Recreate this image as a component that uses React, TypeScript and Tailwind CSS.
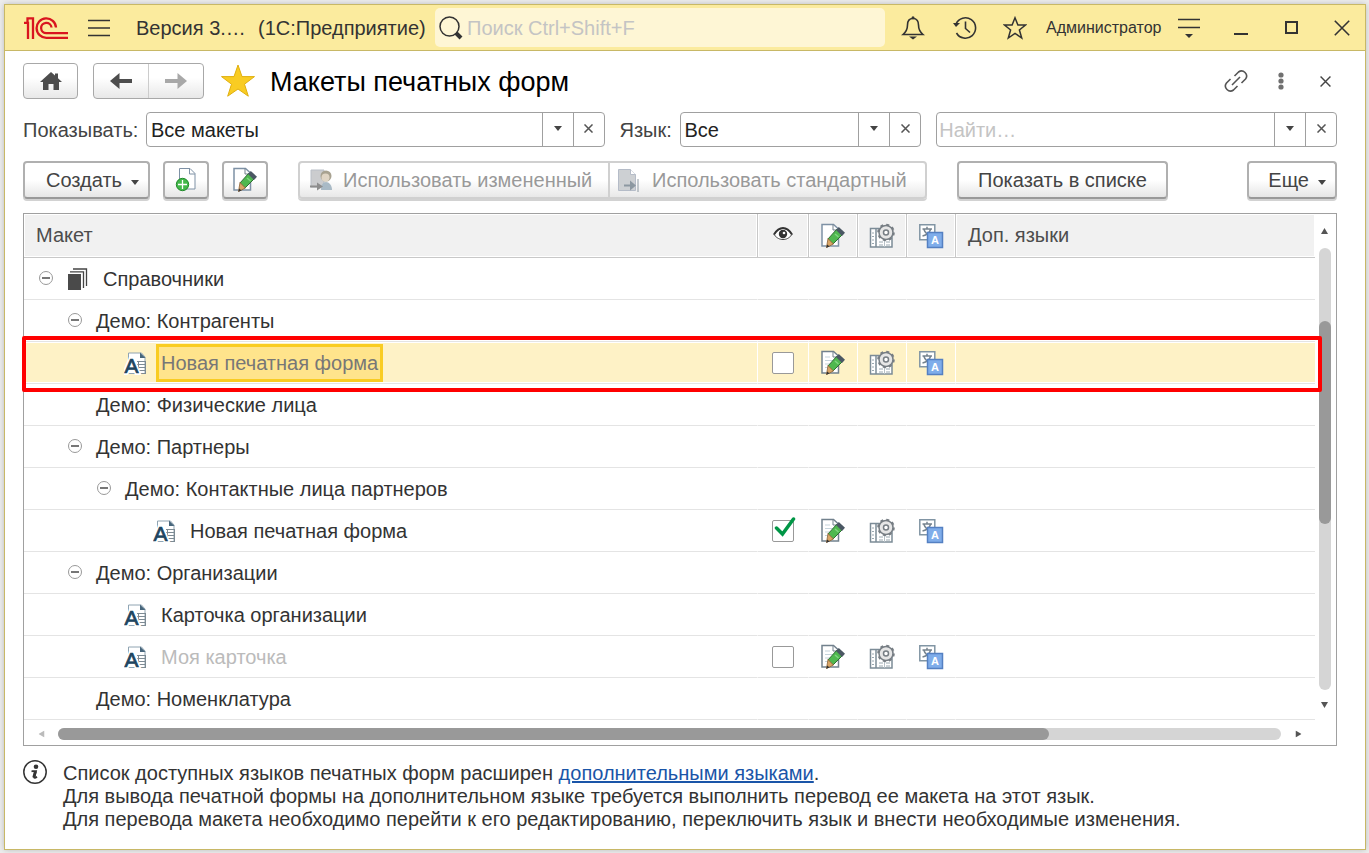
import React, { useState } from 'react';
import clsx from 'clsx';

type RowKind = 'root' | 'group' | 'layout';

interface LayoutRow {
  id: string;
  title: string;
  kind: RowKind;
  level: number;
  expanded?: boolean;
  used?: boolean;
  selected?: boolean;
  muted?: boolean;
}

const ROWS: LayoutRow[] = [
  { id: 'catalogs', title: 'Справочники', kind: 'root', level: 0, expanded: true },
  { id: 'contractors', title: 'Демо: Контрагенты', kind: 'group', level: 1, expanded: true },
  { id: 'contractors-new', title: 'Новая печатная форма', kind: 'layout', level: 2, used: false, selected: true },
  { id: 'persons', title: 'Демо: Физические лица', kind: 'group', level: 1 },
  { id: 'partners', title: 'Демо: Партнеры', kind: 'group', level: 1, expanded: true },
  { id: 'contacts', title: 'Демо: Контактные лица партнеров', kind: 'group', level: 2, expanded: true },
  { id: 'contacts-new', title: 'Новая печатная форма', kind: 'layout', level: 3, used: true },
  { id: 'companies', title: 'Демо: Организации', kind: 'group', level: 1, expanded: true },
  { id: 'company-card', title: 'Карточка организации', kind: 'layout', level: 2 },
  { id: 'my-card', title: 'Моя карточка', kind: 'layout', level: 2, used: false, muted: true },
  { id: 'items', title: 'Демо: Номенклатура', kind: 'group', level: 1 },
];

const INDENT = ['pl-[15px]', 'pl-[44px]', 'pl-[73px]', 'pl-[102px]'];

/* ---------- icons ---------- */

const Logo = () => (
  <svg width="44" height="22" viewBox="0 0 44 22" fill="none" stroke="#d9151f" strokeWidth="2.300">
    <path d="M0 5.800h4V22M3.500 5.800V1.300H9V22" />
    <path d="M32 10.500A9.700 9.700 0 1 0 22.500 20.800H44" />
    <path d="M27.500 10.500A5.200 5.200 0 1 0 22.500 16.200H44" />
  </svg>
);

const MenuIcon = () => (
  <svg width="22" height="18" viewBox="0 0 22 18" stroke="#333" strokeWidth="1.500">
    <path d="M0 1.500h22M0 9h22M0 16.500h22" />
  </svg>
);

const SearchIcon = () => (
  <svg width="24" height="24" viewBox="0 0 24 24" fill="none" stroke="#333">
    <circle cx="10.500" cy="10.500" r="9.500" strokeWidth="1.500" />
    <path d="M17 17l5 5" strokeWidth="4" />
  </svg>
);

const BellIcon = () => (
  <svg width="24" height="24" viewBox="0 0 24 24" fill="none" stroke="#333" strokeWidth="1.600">
    <path d="M12 2.500c-4 0-5.500 3-5.500 6.500 0 5-1.500 7-4.500 9.500h20C19 16 17.500 14 17.500 9c0-3.500-1.500-6.500-5.500-6.500z" />
    <path d="M8 20.500h8l-4 3z" fill="#333" stroke="none" />
    <circle cx="12" cy="1.800" r="1.500" fill="#333" stroke="none" />
  </svg>
);

const HistoryIcon = () => (
  <svg width="24" height="24" viewBox="0 0 24 24" fill="none" stroke="#333" strokeWidth="1.600">
    <path d="M3 8A10.200 10.200 0 1 1 3.500 17" />
    <path d="M12.500 5.500v7l4.500 4" />
    <path d="M0 7h7L3 11z" fill="#333" stroke="none" />
  </svg>
);

const StarIcon = () => (
  <svg width="24" height="24" viewBox="0 0 24 24" fill="none" stroke="#333" strokeWidth="1.500">
    <path d="M12 1.800l2.900 7.200h7.600l-6.100 4.900 2.300 8.100L12 17.300 5.300 22l2.300-8.100L1.500 9h7.600z" />
  </svg>
);

const ServiceMenuIcon = () => (
  <svg width="22" height="22" viewBox="0 0 22 22" stroke="#333" strokeWidth="1.500">
    <path d="M0 2.500h22M0 10.500h22" />
    <path d="M7 17h8l-4 4z" fill="#333" stroke="none" />
  </svg>
);

const FavoriteStar = () => (
  <svg width="36" height="34" viewBox="0 0 36 34">
    <path d="M18 1l4 11.600h12.500l-10 7.600 3.800 12L18 25 7.700 32.200l3.800-12-10-7.600H14z" fill="#f9cc22" stroke="#e0b010" />
  </svg>
);

const HomeIcon = () => (
  <svg width="22" height="18" viewBox="0 0 22 18" fill="#4d4d4d">
    <path d="M11 0l4 3.500V1.500h3v4.700L22 10h-3v8h-5.500v-6h-5v6H3v-8H0z" />
  </svg>
);

const ArrowIcon = ({ className }: { className: string }) => (
  <svg width="22" height="16" viewBox="0 0 22 16" className={className} fill="currentColor">
    <path d="M9.500 0v6H22v4H9.500v6L0 8z" />
  </svg>
);

const LinkIcon = () => (
  <svg width="24" height="24" viewBox="0 0 24 24" fill="none" stroke="#555" strokeWidth="1.600">
    <path d="M10.500 7L14.500 3a5 5 0 0 1 7 7l-4 4M13.500 17l-4 4a5 5 0 0 1-7-7l4-4M8 16l8-8" />
  </svg>
);

const DotsIcon = () => (
  <svg width="6" height="18" viewBox="0 0 6 18" fill="#707070">
    <circle cx="3" cy="3" r="2.600" />
    <circle cx="3" cy="9" r="2.600" />
    <circle cx="3" cy="15" r="2.600" />
  </svg>
);

const CrossIcon = ({ size, width }: { size: number; width: number }) => (
  <svg width={size} height={size} viewBox="0 0 10 10" stroke="currentColor" strokeWidth={width}>
    <path d="M0.500 0.500l9 9M9.500 0.500l-9 9" />
  </svg>
);

const Caret = ({ className }: { className?: string }) => (
  <svg width="8" height="5" viewBox="0 0 8 5" className={className} fill="currentColor">
    <path d="M0 0h8L4 5z" />
  </svg>
);

const ScrollArrow = ({ className }: { className?: string }) => (
  <svg width="7" height="6" viewBox="0 0 7 6" className={className} fill="currentColor">
    <path d="M0 6h7L3.500 0z" />
  </svg>
);

const Pencil = () => (
  <g>
    <path d="M16.500 6.500l5.500 5.500-9 9-5-5z" fill="#4fb84f" stroke="#2f6e35" />
    <path d="M15 11l3.500 3" stroke="#7fd67f" strokeWidth="1.500" />
    <path d="M8 15.500l5.500 5.500L6.500 24.500z" fill="#d9a566" stroke="#8b6236" strokeWidth=".8" />
    <path d="M18.800 4L25 9.800 22 13l-6-6z" fill="#4a5763" />
    <path d="M6.300 24.700l1-3.200 2.300 2z" fill="#333" />
  </g>
);

const PageEditIcon = ({ lines }: { lines?: boolean }) => (
  <svg width="26" height="26" viewBox="0 0 26 26" fill="none">
    <path d="M2 1.500h11.500L18.500 6v17H2z" fill="#fff" stroke={lines ? '#72818d' : '#7e91a5'} strokeWidth="1.500" />
    <path d="M13 1.500V7h5.500" stroke="#72818d" />
    {lines && <path d="M5 7h5M5 10.500h9M5 14h7M5 17.500h4" stroke="#c5d3db" />}
    <Pencil />
  </svg>
);

const PageAddIcon = () => (
  <svg width="26" height="26" viewBox="0 0 26 26" fill="none">
    <path d="M6.500 1.500h10.500l5 5v15.500H6.500z" fill="#fff" stroke="#7e91a5" />
    <path d="M16.500 1.500V7H22" stroke="#7e91a5" />
    <circle cx="9.500" cy="17.500" r="6.200" fill="#43b84a" stroke="#218a2b" />
    <path d="M9.500 13v9M5 17.500h9" stroke="#fff" strokeWidth="1.300" />
  </svg>
);

const GearTableIcon = () => (
  <svg width="26" height="26" viewBox="0 0 26 26" fill="none">
    <path d="M1.500 5.500h5.500V24H1.500zM7 5.500h16V24H7z" fill="#fff" stroke="#7c8c97" strokeWidth="1.500" />
    <path d="M3 10h2M3 13.500h2M3 17h2M3 20.500h2M10 19h4M17 19h4M10 22h4M17 22h4" stroke="#9aa8b0" />
    <path d="M15.500 16v8" stroke="#b7c1c7" />
    <circle cx="17" cy="9.500" r="7" fill="#e6e6e6" stroke="#777e84" strokeWidth="1.500" />
    <circle cx="17" cy="9.500" r="7.800" stroke="#777e84" strokeWidth="2" strokeDasharray="3 3.126" />
    <circle cx="17" cy="9.500" r="2.500" fill="#fff" stroke="#777e84" strokeWidth="1.500" />
  </svg>
);

const TranslateIcon = () => (
  <svg width="26" height="26" viewBox="0 0 26 26" fill="none">
    <path d="M1.800 1.800h15v15h-15z" fill="#fff" stroke="#8195a4" strokeWidth="1.500" />
    <path d="M4.500 6h9.500M9 3.800V6M6 6.500c1 3.500 4 5.500 7.500 6.500M12.500 6.500c-1 3.500-4 5.500-8 6.500" stroke="#75838e" strokeWidth="1.500" />
    <path d="M9.500 9.500h15v15h-15z" fill="#7fadea" stroke="#5480c2" strokeWidth="1.500" />
    <text x="17" y="21" textAnchor="middle" fontSize="11" fontWeight="700" fontFamily="Liberation Sans, sans-serif" fill="#fff">A</text>
  </svg>
);

const EyeIcon = () => (
  <svg width="20" height="14" viewBox="0 0 20 14" fill="none">
    <path d="M1 7.500C4 2.500 8 1.500 10 1.500s6 1 9 6c-3 4-6 5-9 5s-6-1-9-5z" fill="#fff" stroke="#444" />
    <path d="M1 7.500C4 2.500 7 1 10 1s6 1.500 9 6.500" stroke="#333" strokeWidth="2" />
    <circle cx="10" cy="7" r="4.200" fill="#333" />
    <circle cx="11" cy="6" r="1.300" fill="#fff" />
  </svg>
);

const StackIcon = () => (
  <svg width="20" height="22" viewBox="0 0 20 22" fill="none" stroke="#444">
    <path d="M0 6h13v16H0z" fill="#4a4a4a" stroke="none" />
    <path d="M2 3.800h13.500V20" strokeWidth="1.300" />
    <path d="M5 1h13.500v17" strokeWidth="1.300" />
  </svg>
);

const LayoutIcon = () => (
  <svg width="24" height="28" viewBox="-1 -2 24 28" fill="none">
    <path d="M3.500 2h13L20 6v16.500H3.500z" fill="#fff" stroke="#90a4b2" />
    <path d="M15 1.500v5.500h5.500z" fill="#47667c" />
    <path d="M12 10.500h9M12 13.500h9M12 16.500h9M12 19.500h9M12 22.500h9M13.500 10v13M20.500 10v13" stroke="#7d8b94" />
    <text x="6.500" y="22" textAnchor="middle" fontSize="21" fontFamily="Liberation Sans Narrow, Liberation Sans, sans-serif" fill="none" stroke="#fff" strokeWidth="4">A</text>
    <text x="6.500" y="22" textAnchor="middle" fontSize="21" fontFamily="Liberation Sans Narrow, Liberation Sans, sans-serif" fill="#1e4560" stroke="#1e4560" strokeWidth=".7">A</text>
  </svg>
);

const CollapseIcon = () => (
  <svg width="14" height="14" viewBox="0 0 14 14" fill="none">
    <circle cx="7" cy="7" r="6.500" stroke="#999" />
    <path d="M3 7h8" stroke="#777" strokeWidth="2" />
  </svg>
);

const UseModifiedIcon = () => (
  <svg width="24" height="24" viewBox="0 0 24 24" fill="none">
    <path d="M2 2h13v17H2z" fill="#cbccce" stroke="#b9bec6" />
    <path d="M12 22c0-5 2-8 5-8s6 3 6 8z" fill="#a9bac6" />
    <circle cx="17" cy="8" r="5.500" fill="#a8a290" />
    <circle cx="16.500" cy="9.500" r="4" fill="#e0d5c4" />
    <path d="M1 18.500h9" stroke="#8d8d8d" strokeWidth="2" />
    <path d="M8 14.500l6 4-6 4z" fill="#8d8d8d" />
  </svg>
);

const UseStandardIcon = () => (
  <svg width="24" height="24" viewBox="0 0 24 24" fill="none">
    <path d="M1.500 1.500h12l5 5v16h-17z" fill="#cdd0d3" stroke="#b5bcc8" />
    <path d="M13.500 1.500v5h5" fill="#fff" stroke="#b5bcc8" />
    <path d="M7 17.500h8" stroke="#8c98a1" strokeWidth="2" />
    <path d="M13 12.500l6 5-6 5z" fill="#8c98a1" />
    <path d="M21 11v13" stroke="#8c98a1" />
  </svg>
);

const InfoIcon = () => (
  <svg width="24" height="24" viewBox="0 0 24 24" fill="none" className="shrink-0">
    <circle cx="12" cy="12" r="11.200" stroke="#333" strokeWidth="1.500" />
    <circle cx="13" cy="6.800" r="2.300" fill="#333" />
    <path d="M8.500 11.500l1-.3h3.500l-1.800 6c-.2 1 .8 1 2.800-.4" stroke="#333" strokeWidth="1.800" />
    <path d="M12.300 11.500l-1.500 6" stroke="#333" strokeWidth="3" />
  </svg>
);

/* ---------- controls ---------- */

const BUTTON =
  'flex h-[38px] items-center rounded-[4px] border-2 border-[#b0b0b0] border-b-[#999] bg-linear-to-b from-white from-50% to-[#e6e6e6] text-[#444] shadow-[0_2px_0_#d2d2d2]';

const FieldButtons = ({ name }: { name: string }) => (
  <>
    <button type="button" aria-label={`${name} выбрать`} className="flex w-[31px] shrink-0 items-center justify-center border-l border-[#a0a0a0] pb-[2px] text-[#444]">
      <Caret />
    </button>
    <button type="button" aria-label={`${name} очистить`} className="flex w-[31px] shrink-0 items-center justify-center border-l border-[#a0a0a0] pb-[2px] text-[#555]">
      <CrossIcon size={9} width={1.7} />
    </button>
  </>
);

const FIELD = 'flex h-[35px] min-w-0 overflow-hidden rounded-[4px] border border-[#a0a0a0] bg-white';

const TitleBar = () => (
  <header className="flex h-[46px] items-center border-b border-[#c8b866] bg-[#fbeb9e] pl-[19px] text-[#333]">
    <Logo />
    <button type="button" aria-label="Меню" className="ml-5 shrink-0"><MenuIcon /></button>
    <span className="ml-[26px] w-[122px] shrink-0 pt-[2px] whitespace-nowrap">Версия 3.…</span>
    <span className="w-[177px] shrink-0 pt-[2px] whitespace-nowrap">(1С:Предприятие)</span>
    <label className="flex h-[39px] min-w-0 flex-1 items-center rounded-[5px] bg-[#fef6d5] pl-1">
      <SearchIcon />
      <input type="search" aria-label="Поиск" placeholder="Поиск Ctrl+Shift+F" className="ml-1 min-w-0 flex-1 bg-transparent pt-[2px] outline-none placeholder:text-[#c4c4c4]" />
    </label>
    <div className="ml-4 flex items-center">
      <button type="button" aria-label="Оповещения"><BellIcon /></button>
      <button type="button" aria-label="История" className="ml-7"><HistoryIcon /></button>
      <button type="button" aria-label="Избранное" className="ml-[26px]"><StarIcon /></button>
      <button type="button" className="ml-[19px] w-[132px] text-left text-base">Администратор</button>
      <button type="button" aria-label="Сервис и настройки"><ServiceMenuIcon /></button>
    </div>
    <div className="ml-[34px] mr-[15px] flex items-center">
      <button type="button" aria-label="Свернуть" className="flex h-[14px] w-[14px] items-end"><span className="h-[2px] w-full bg-[#333]" /></button>
      <button type="button" aria-label="Развернуть" className="ml-[37px] h-[13px] w-[13px] border-2 border-[#333]" />
      <button type="button" aria-label="Закрыть окно" className="ml-9"><CrossIcon size={16} width={1} /></button>
    </div>
  </header>
);

const FormHeader = () => (
  <div className="flex items-center">
    <button type="button" aria-label="Домой" className="flex h-9 w-[55px] items-center justify-center rounded-[4px] border border-[#a8a8a8] bg-linear-to-b from-white from-40% to-[#e8e8e8]">
      <HomeIcon />
    </button>
    <div className="ml-[15px] flex h-9 w-[111px] rounded-[4px] border border-[#a8a8a8] bg-linear-to-b from-white from-40% to-[#e8e8e8]">
      <button type="button" aria-label="Назад" className="flex flex-1 items-center justify-center border-r border-[#ccc]">
        <ArrowIcon className="text-[#4d4d4d]" />
      </button>
      <button type="button" aria-label="Вперед" className="flex flex-1 items-center justify-center">
        <ArrowIcon className="rotate-180 text-[#a8a8a8]" />
      </button>
    </div>
    <button type="button" aria-label="Добавить в избранное" className="ml-4"><FavoriteStar /></button>
    <h1 className="ml-[14px] flex-1 pt-[2px] text-[27px] leading-8 text-black">Макеты печатных форм</h1>
    <div className="mr-[6px] flex items-center text-[#444]">
      <button type="button" aria-label="Получить ссылку"><LinkIcon /></button>
      <button type="button" aria-label="Еще действия" className="ml-[30px]"><DotsIcon /></button>
      <button type="button" aria-label="Закрыть" className="ml-9"><CrossIcon size={11} width={1.3} /></button>
    </div>
  </div>
);

const Filters = () => (
  <div className="mt-[13px] flex items-center text-[#444]">
    <label htmlFor="show" className="w-[123px] shrink-0 pt-[2px]">Показывать:</label>
    <div className={clsx(FIELD, 'flex-[459]')}>
      <select id="show" className="min-w-0 flex-1 appearance-none pt-[2px] pl-1 text-[#222] outline-none">
        <option>Все макеты</option>
      </select>
      <FieldButtons name="Показывать" />
    </div>
    <label htmlFor="lang" className="ml-[15px] w-[60px] shrink-0 pt-[2px]">Язык:</label>
    <div className={clsx(FIELD, 'flex-[241]')}>
      <select id="lang" className="min-w-0 flex-1 appearance-none pt-[2px] pl-1 text-[#222] outline-none">
        <option>Все</option>
      </select>
      <FieldButtons name="Язык" />
    </div>
    <div className={clsx(FIELD, 'ml-[15px] flex-[401]')}>
      <input type="text" aria-label="Найти" placeholder="Найти…" className="min-w-0 flex-1 pt-[2px] pl-[2px] outline-none placeholder:text-[#c4c4c4]" />
      <FieldButtons name="Найти" />
    </div>
  </div>
);

const Toolbar = () => (
  <div className="mt-[14px] flex whitespace-nowrap">
    <button type="button" className={clsx(BUTTON, 'w-[127px] justify-end pr-[9px]')}>
      Создать <Caret className="mt-1 ml-[9px]" />
    </button>
    <button type="button" aria-label="Создать макет" className={clsx(BUTTON, 'ml-[13px] w-[46px] justify-center')}><PageAddIcon /></button>
    <button type="button" aria-label="Изменить" className={clsx(BUTTON, 'ml-[13px] w-[46px] justify-center')}><PageEditIcon /></button>
    <div className="ml-[30px] flex h-[38px] w-[629px] rounded-[4px] border-2 border-[#d0d0d0] bg-linear-to-b from-white from-50% to-[#e8e8e8] text-[#999] shadow-[0_2px_0_#d2d2d2]">
      <button type="button" disabled className="flex w-[310px] items-center border-r-2 border-[#d0d0d0] pl-[9px]">
        <UseModifiedIcon />
        <span className="ml-[10px]">Использовать измененный</span>
      </button>
      <button type="button" disabled className="flex flex-1 items-center pl-[7px]">
        <UseStandardIcon />
        <span className="ml-[11px]">Использовать стандартный</span>
      </button>
    </div>
    <button type="button" className={clsx(BUTTON, 'ml-[30px] w-[211px] justify-center')}>Показать в списке</button>
    <button type="button" className={clsx(BUTTON, 'ml-auto w-[90px] justify-end pr-[9px]')}>
      Еще <Caret className="mt-1 ml-[9px]" />
    </button>
  </div>
);

/* ---------- table ---------- */

const HEAD_CELL = 'border-r border-b border-[#c8c8c8] bg-[#f1f1f1] p-0 font-normal shadow-[inset_0_0_0_1px_#fff]';

const LayoutTable = () => {
  const [used, setUsed] = useState<Record<string, boolean>>(
    Object.fromEntries(ROWS.map(row => [row.id, !!row.used]))
  );

  const toggle = (id: string) => setUsed(prev => ({ ...prev, [id]: !prev[id] }));

  return (
    <table className="w-full table-fixed border-separate border-spacing-0 text-left">
      <colgroup>
        <col />
        <col className="w-[51px]" />
        <col className="w-[49px]" />
        <col className="w-[49px]" />
        <col className="w-[49px]" />
        <col className="w-[359px]" />
      </colgroup>
      <thead className="text-[#4d4d4d]">
        <tr className="h-11">
          <th className={clsx(HEAD_CELL, 'pl-3')}>Макет</th>
          <th className={HEAD_CELL}><span className="flex justify-center pb-1"><EyeIcon /></span></th>
          <th className={HEAD_CELL}><span className="flex justify-center"><PageEditIcon /></span></th>
          <th className={HEAD_CELL}><span className="flex justify-center"><GearTableIcon /></span></th>
          <th className={HEAD_CELL}><span className="flex justify-center"><TranslateIcon /></span></th>
          <th className={clsx(HEAD_CELL, 'border-r-0 pl-3')}>Доп. языки</th>
        </tr>
      </thead>
      <tbody className="text-[#333]">
        {ROWS.map(row => {
          const cell = clsx(
            'border-r border-b border-r-white border-b-[#e4e4e4] p-0',
            row.selected && 'bg-[#fef2c6] shadow-[inset_0_1px_0_#fff,inset_0_-1px_0_#fff]'
          );
          const hasState = row.used !== undefined;
          return (
            <tr key={row.id} className={clsx('h-[42px]', row.selected && 'relative')}>
              <td className={cell}>
                <div className={clsx('flex h-[38px] items-center', INDENT[row.level])}>
                  {row.expanded && (
                    <button type="button" aria-label="Свернуть группу" className="mb-[2px]"><CollapseIcon /></button>
                  )}
                  {row.kind === 'root' && <span className="ml-[15px]"><StackIcon /></span>}
                  {row.kind === 'layout' && <span className="ml-[27px]"><LayoutIcon /></span>}
                  <span
                    className={clsx(
                      'pt-[2px]',
                      row.kind === 'root' && 'ml-[15px]',
                      row.kind === 'group' && (row.expanded ? 'ml-[14px]' : 'ml-7'),
                      row.kind === 'layout' && 'ml-2 flex h-[38px] items-center border-[3px] px-[2px]',
                      row.selected ? 'border-[#f9cc22] bg-[#ffe48c] text-[#777]' : 'border-transparent',
                      row.muted && 'text-[#bbb]'
                    )}
                  >
                    {row.title}
                  </span>
                </div>
                {row.selected && (
                  <span className="pointer-events-none absolute -top-[6px] -right-[7px] -bottom-2 -left-[2px] z-10 rounded-[2px] border-4 border-[#f00]" />
                )}
              </td>
              <td className={cell}>
                {hasState && (
                  <label className="relative mx-auto block h-[22px] w-[22px]">
                    <input
                      type="checkbox"
                      aria-label={`Использовать: ${row.title}`}
                      checked={used[row.id]}
                      onChange={() => toggle(row.id)}
                      className="block h-[22px] w-[22px] appearance-none rounded-[2px] border border-[#999] bg-white"
                    />
                    {used[row.id] && (
                      <svg width="22" height="22" viewBox="0 0 22 22" fill="none" className="pointer-events-none absolute -top-[3px] left-[2px]">
                        <path d="M2.500 11l6 6L19.500 2" stroke="#009646" strokeWidth="3.500" strokeLinecap="round" />
                      </svg>
                    )}
                  </label>
                )}
              </td>
              <td className={cell}>{hasState && <span className="flex justify-center"><PageEditIcon lines /></span>}</td>
              <td className={cell}>{hasState && <span className="flex justify-center"><GearTableIcon /></span>}</td>
              <td className={cell}>{hasState && <span className="flex justify-center"><TranslateIcon /></span>}</td>
              <td className={clsx(cell, 'border-r-0')} />
            </tr>
          );
        })}
      </tbody>
    </table>
  );
};

const VerticalScroll = () => (
  <div className="flex w-[21px] shrink-0 flex-col items-center pr-[2px] text-[#555]">
    <button type="button" aria-label="Вверх" className="flex h-[34px] items-center justify-center">
      <ScrollArrow />
    </button>
    <div className="flex w-3 flex-1 flex-col rounded-full bg-[#d5d5d5]">
      <div className="flex-[73]" />
      <div className="flex-[203] rounded-full bg-[#999]" />
      <div className="flex-[166]" />
    </div>
    <button type="button" aria-label="Вниз" className="flex h-[30px] items-center justify-center">
      <ScrollArrow className="rotate-180" />
    </button>
  </div>
);

const HorizontalScroll = () => (
  <div className="flex h-[25px] items-center pt-[2px] pr-[21px] text-[#555]">
    <button type="button" aria-label="Влево" className="flex w-[34px] items-center justify-center text-[#bbb]">
      <ScrollArrow className="-rotate-90" />
    </button>
    <div className="h-3 flex-1 rounded-full bg-[#d5d5d5]">
      <div className="h-3 w-[81%] rounded-full bg-[#999]" />
    </div>
    <button type="button" aria-label="Вправо" className="flex w-[34px] items-center justify-center">
      <ScrollArrow className="rotate-90" />
    </button>
  </div>
);

export default function App() {
  return (
    <div className="flex min-h-screen flex-col bg-[#eeeeee] pt-1 pr-[3px] pb-[3px] pl-1 font-['Liberation_Sans',Arial,sans-serif] text-[20px] leading-[23px]">
      <div className="flex flex-1 flex-col border border-[#c8b866] bg-white shadow-[0_0_6px_#bbb]">
        <TitleBar />
        <main className="pt-3 pr-7 pb-4 pl-[18px]">
          <FormHeader />
          <Filters />
          <Toolbar />
          <section className="mt-[14px] border border-[#a0a0a0]">
            <div className="flex">
              <div className="min-w-0 flex-1"><LayoutTable /></div>
              <VerticalScroll />
            </div>
            <HorizontalScroll />
          </section>
          <div className="mt-[14px] flex text-[#333]">
            <InfoIcon />
            <p className="ml-4 pt-[2px]">
              Список доступных языков печатных форм расширен{' '}
              <a href="#languages" className="text-[#1a55a8] underline">дополнительными языками</a>.
              <br />
              Для вывода печатной формы на дополнительном языке требуется выполнить перевод ее макета на этот язык.
              <br />
              Для перевода макета необходимо перейти к его редактированию, переключить язык и внести необходимые изменения.
            </p>
          </div>
        </main>
      </div>
    </div>
  );
}
